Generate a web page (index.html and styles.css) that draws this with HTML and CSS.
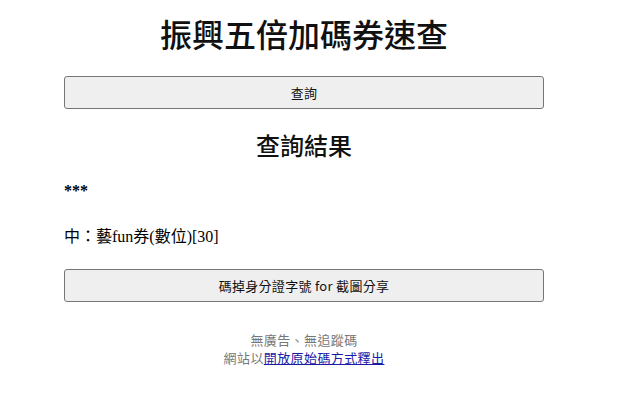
FILE: index.html
```html
<!DOCTYPE html>
<html lang="zh-Hant">
<head>
<meta charset="utf-8">
<title>振興五倍加碼券速查</title>
<link rel="stylesheet" href="styles.css">
</head>
<body>
<div class="wrap">
  <main class="page">
    <h1 class="title">振興五倍加碼券速查</h1>
    <button class="btn btn-query" type="button">查詢</button>
    <h2 class="subtitle">查詢結果</h2>
    <p class="mask">***</p>
    <p class="result">中：藝fun券(數位)[30]</p>
    <button class="btn btn-share" type="button">碼掉身分證字號 for 截圖分享</button>
    <footer class="foot">
      <div class="foot-line">無廣告、無追蹤碼</div>
      <div class="foot-line">網站以<a class="foot-link" href="#">開放原始碼方式釋出</a></div>
    </footer>
  </main>
</div>
</body>
</html>
```

FILE: styles.css
```css
html, body {
  margin: 0;
  padding: 0;
  background: #ffffff;
}
body {
  font-family: "Liberation Serif", "Noto Sans CJK TC", serif;
  color: #000;
}
.wrap {
  width: 608px;
}
.page {
  width: 480px;
  margin: 0 auto;
  display: flex;
  flex-direction: column;
  padding-top: 13px;
}
.title {
  font-family: "Noto Sans CJK TC", sans-serif;
  font-size: 32px;
  line-height: 40px;
  font-weight: 500;
  text-align: center;
  margin: 0 0 23px;
  color: #111;
}
.btn {
  font-family: "Noto Sans CJK TC", sans-serif;
  font-size: 13px;
  letter-spacing: 0.3px;
  height: 33px;
  background: #efefef;
  border: 1px solid #767676;
  border-radius: 3px;
  color: #111;
  padding: 0;
  width: 100%;
}
.subtitle {
  font-family: "Noto Sans CJK TC", sans-serif;
  font-size: 24px;
  line-height: 32px;
  font-weight: 500;
  text-align: center;
  margin: 20px 0 20px;
  color: #111;
}
.mask {
  font-size: 16px;
  line-height: 20px;
  font-weight: 700;
  margin: 0 0 26px;
}
.result {
  font-size: 16px;
  line-height: 20px;
  margin: 0 0 22px;
}
.foot {
  margin-top: 29px;
  text-align: center;
  font-family: "Noto Sans CJK TC", sans-serif;
  font-size: 13px;
  letter-spacing: 0.4px;
  line-height: 18px;
  color: #777;
}
.foot-link {
  color: #1a1aa6;
  text-decoration: underline;
}
```
